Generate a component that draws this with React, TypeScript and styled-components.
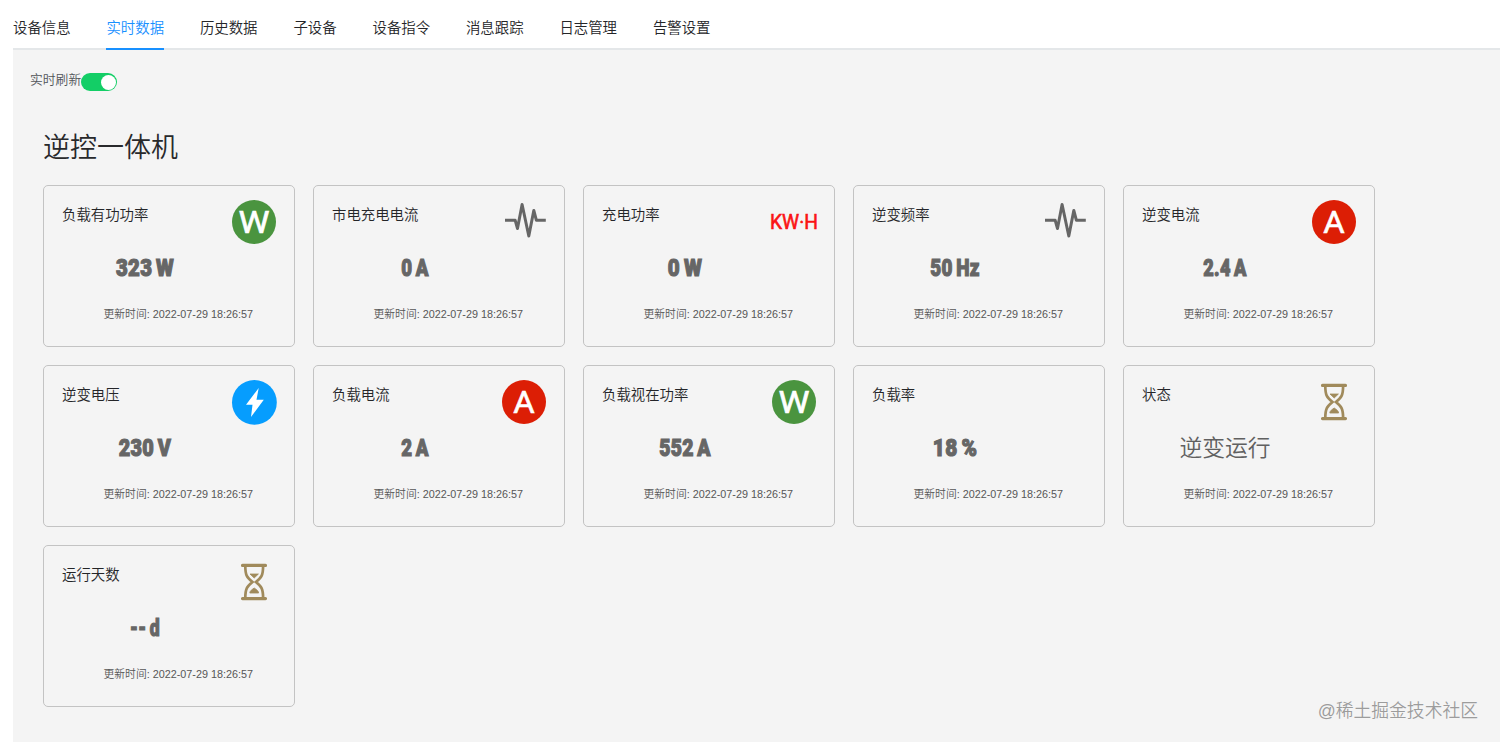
import React from 'react';
import styled, { createGlobalStyle } from 'styled-components';

const GlobalStyle = createGlobalStyle`
  * { box-sizing: border-box; }
  body {
    margin: 0;
    background: #fff;
    overflow: hidden;
    font-family: "Liberation Sans", "Noto Sans CJK SC", sans-serif;
    font-weight: 350;
  }
`;

const Page = styled.div`
  height: 742px;
  padding-left: 13px;
  display: flex;
  flex-direction: column;
`;

const TabBar = styled.nav`
  display: flex;
  gap: 35.9px;
  height: 50px;
  flex: none;
  background: linear-gradient(#e4e7e9, #e4e7e9) bottom / 100% 2px no-repeat;
`;

const Tab = styled.a<{ $active?: boolean }>`
  height: 50px;
  padding-top: 7px;
  line-height: 43px;
  font-size: 14.4px;
  white-space: nowrap;
  color: ${(p) => (p.$active ? '#1890ff' : '#242528')};
  border-bottom: 2px solid ${(p) => (p.$active ? '#1890ff' : 'transparent')};
`;

const Pane = styled.main`
  position: relative;
  flex: 1;
  background: #f4f4f4;
`;

const RefreshRow = styled.div`
  display: flex;
  padding: 21px 0 0 17px;
  height: 76px;
`;

const RefreshLabel = styled.span`
  width: 51px;
  font-size: 12.8px;
  line-height: 18px;
  white-space: nowrap;
  color: #505358;
`;

const Switch = styled.span`
  display: flex;
  justify-content: flex-end;
  align-items: center;
  width: 36px;
  height: 18px;
  margin-top: 2px;
  padding-right: 1.5px;
  border-radius: 9px;
  background: #13ce66;
`;

const Knob = styled.span`
  width: 15px;
  height: 15px;
  border-radius: 50%;
  background: #fff;
`;

const Heading = styled.h1`
  margin: 0 0 0 30px;
  height: 59px;
  line-height: 45px;
  font-size: 27px;
  font-weight: 350;
  color: #28292b;
`;

const Grid = styled.section`
  display: grid;
  grid-template-columns: repeat(5, 252px);
  grid-auto-rows: 162px;
  gap: 18px;
  padding-left: 30px;
`;

const Card = styled.article`
  display: flex;
  flex-direction: column;
  border: 1px solid #c3c3c3;
  border-radius: 5px;
`;

const CardHead = styled.header`
  display: flex;
  justify-content: space-between;
  height: 66px;
  padding: 13px 16px 0 18px;
`;

const CardTitle = styled.h2`
  margin: 0;
  padding-top: 5px;
  font-size: 14.4px;
  line-height: 22px;
  font-weight: 350;
  color: #242528;
`;

const Value = styled.div<{ $stretch: number }>`
  width: 202px;
  height: 32px;
  line-height: 31px;
  text-align: center;
  white-space: nowrap;
  font-family: Roboto, "Liberation Sans", sans-serif;
  font-size: 24.5px;
  font-weight: 900;
  letter-spacing: 0.4px;
  word-spacing: -2px;
  transform: scaleX(${(p) => p.$stretch});
  -webkit-text-stroke: 1.2px #666;
  color: #666;
`;

const StatusValue = styled.div`
  width: 202px;
  height: 32px;
  line-height: 33px;
  text-align: center;
  font-size: 22.8px;
  color: #606060;
`;

const Updated = styled.time`
  padding: 21px 0 0 59.5px;
  font-size: 10.8px;
  line-height: 18px;
  white-space: nowrap;
  color: #565656;
`;

const Watermark = styled.div`
  position: absolute;
  right: 22px;
  bottom: 17px;
  font-size: 17.8px;
  line-height: 27px;
  color: #9c9c9c;
  text-shadow: 0 0 1px #fff;
`;

const Glyph = styled.text`
  font-family: Roboto, sans-serif;
  font-weight: 400;
  stroke-width: 0.6px;
`;

type IconKind = 'watt' | 'amp' | 'volt' | 'pulse' | 'kwh' | 'hourglass';

const Icon = ({ kind }: { kind: IconKind }) => (
  <svg width="48" height="48" viewBox="0 0 48 48" fill="none" overflow="visible">
    {kind === 'watt' && (
      <>
        <circle cx="24" cy="23" r="22" fill="#4a943f" />
        <Glyph x="8.5" y="34.2" textLength="31" lengthAdjust="spacingAndGlyphs" fontSize="31" fill="#fff" stroke="#fff">W</Glyph>
      </>
    )}
    {kind === 'amp' && (
      <>
        <circle cx="24" cy="23" r="22" fill="#dc1e05" />
        <Glyph x="13.3" y="34" textLength="21.4" lengthAdjust="spacingAndGlyphs" fontSize="32" fill="#fff" stroke="#fff">A</Glyph>
      </>
    )}
    {kind === 'volt' && (
      <>
        <circle cx="24.4" cy="23.4" r="22.4" fill="#069dfe" />
        <path d="M28.7 9 16 25.8h6.5L21 38 33.8 20.8h-7.3Z" fill="#fff" />
      </>
    )}
    {kind === 'pulse' && (
      <path
        d="M5 21.3h10.2l2.3 8.2L22.1 5.5l6.7 31.5 5-25.5 2.6 9.8H45.8"
        stroke="#666"
        strokeWidth="3"
        strokeLinejoin="round"
      />
    )}
    {kind === 'kwh' && (
      <Glyph x="0" y="30" textLength="48" lengthAdjust="spacingAndGlyphs" fontSize="20.5" fill="#fb1414" stroke="#fb1414">
        KW·H
      </Glyph>
    )}
    {kind === 'hourglass' && (
      <g stroke="#a08a5b">
        <path d="M12.5 6.4h23M12.5 39.6h23" strokeWidth="3.2" strokeLinecap="round" />
        <path
          d="M15.3 7c0 9.5 1.700 11.500 7.200 16-5.500 4.500-7.200 6.500-7.200 16M33.100 7c0 9.500-1.700 11.500-7.200 16 5.500 4.500 7.200 6.500 7.200 16"
          strokeWidth="2.7"
        />
        <path
          d="M20 15h8.400L24.200 19ZM19.800 34c0-2.300 2.400-3.500 4.400-5 2 1.500 4.400 2.700 4.400 5Z"
          fill="#a08a5b"
          strokeWidth="0.8"
        />
      </g>
    )}
  </svg>
);

interface Metric {
  title: string;
  value: string;
  icon?: IconKind;
  stretch?: number;
  status?: boolean;
}

const tabs = ['设备信息', '实时数据', '历史数据', '子设备', '设备指令', '消息跟踪', '日志管理', '告警设置'];

const metrics: Metric[] = [
  { title: '负载有功功率', value: '323 W', icon: 'watt', stretch: 0.83 },
  { title: '市电充电电流', value: '0 A', icon: 'pulse', stretch: 0.76 },
  { title: '充电功率', value: '0 W', icon: 'kwh', stretch: 0.84 },
  { title: '逆变频率', value: '50 Hz', icon: 'pulse', stretch: 0.77 },
  { title: '逆变电流', value: '2.4 A', icon: 'amp', stretch: 0.74 },
  { title: '逆变电压', value: '230 V', icon: 'volt', stretch: 0.81 },
  { title: '负载电流', value: '2 A', icon: 'amp', stretch: 0.76 },
  { title: '负载视在功率', value: '552 A', icon: 'watt', stretch: 0.79 },
  { title: '负载率', value: '18 %', stretch: 0.85 },
  { title: '状态', value: '逆变运行', icon: 'hourglass', status: true },
  { title: '运行天数', value: '-- d', icon: 'hourglass', stretch: 0.72 },
];

export default function App() {
  return (
    <>
      <GlobalStyle />
      <Page>
        <TabBar>
          {tabs.map((t) => (
            <Tab key={t} $active={t === '实时数据'}>{t}</Tab>
          ))}
        </TabBar>
        <Pane>
          <RefreshRow>
            <RefreshLabel>实时刷新</RefreshLabel>
            <Switch><Knob /></Switch>
          </RefreshRow>
          <Heading>逆控一体机</Heading>
          <Grid>
            {metrics.map((m) => (
              <Card key={m.title}>
                <CardHead>
                  <CardTitle>{m.title}</CardTitle>
                  {m.icon && <Icon kind={m.icon} />}
                </CardHead>
                {m.status ? (
                  <StatusValue>{m.value}</StatusValue>
                ) : (
                  <Value $stretch={m.stretch ?? 0.78}>{m.value}</Value>
                )}
                <Updated>更新时间: 2022-07-29 18:26:57</Updated>
              </Card>
            ))}
          </Grid>
          <Watermark>@稀土掘金技术社区</Watermark>
        </Pane>
      </Page>
    </>
  );
}
